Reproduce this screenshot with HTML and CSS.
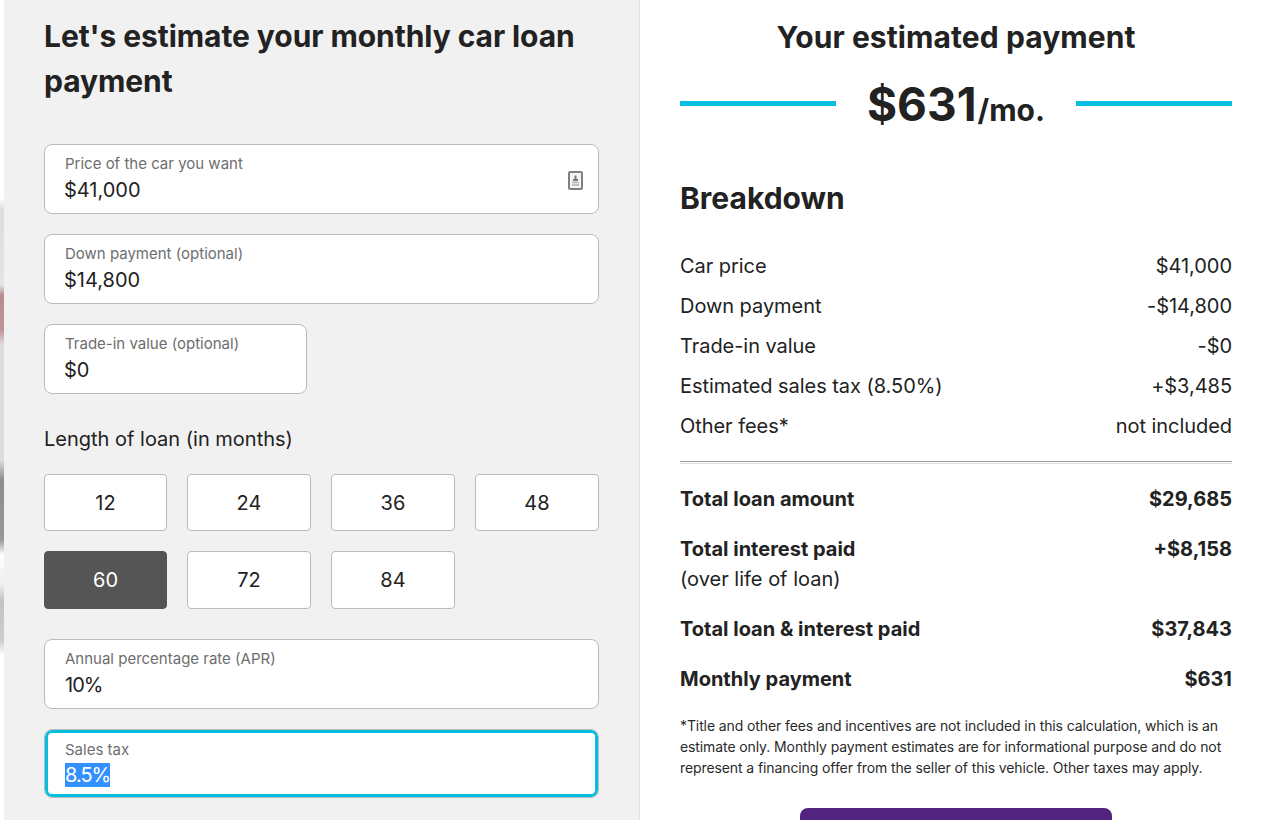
FILE: index.html
```html
<!DOCTYPE html>
<html lang="en">
<head>
    <meta charset="UTF-8">
    <meta name="viewport" content="width=device-width, initial-scale=1.0">
    <title>Payment calculator</title>
    <link rel="stylesheet" href="styles.css">
</head>
<body>
    <div class="backdrop"></div>

    <section class="form-panel">
        <h1>Let's estimate your monthly car loan payment</h1>

        <div class="field">
            <label for="price">Price of the car you want</label>
            <input type="text" id="price" value="$41,000">
            <svg class="field-icon" width="15" height="19" viewBox="0 0 15 19">
                <rect x="1" y="1" width="13" height="17" rx="1" fill="#f4f4f4" stroke="#808080" stroke-width="2"/>
                <path d="M7.5 4.5v4M5 9h5" stroke="#777" stroke-width="2" fill="none"/>
                <path d="M4 11.5h7M4 14h7" stroke="#b0b0b0" stroke-width="1.4" fill="none"/>
            </svg>
        </div>
        <div class="field">
            <label for="down">Down payment (optional)</label>
            <input type="text" id="down" value="$14,800">
        </div>
        <div class="field field-half">
            <label for="trade">Trade-in value (optional)</label>
            <input type="text" id="trade" value="$0">
        </div>

        <p class="term-label">Length of loan (in months)</p>
        <div class="terms">
            <button>12</button>
            <button>24</button>
            <button>36</button>
            <button>48</button>
            <button class="active">60</button>
            <button>72</button>
            <button>84</button>
        </div>

        <div class="field field-rate">
            <label for="apr">Annual percentage rate (APR)</label>
            <input type="text" id="apr" value="10%">
        </div>
        <div class="field field-rate field-focus">
            <label>Sales tax</label>
            <div class="value"><span class="selected">8.5%</span></div>
        </div>
    </section>

    <section class="result-panel">
        <h2>Your estimated payment</h2>
        <div class="payment">
            <span class="rule"></span>
            <div class="amount">$631<span>/mo.</span></div>
            <span class="rule"></span>
        </div>

        <h3>Breakdown</h3>
        <div class="row"><span>Car price</span><span>$41,000</span></div>
        <div class="row"><span>Down payment</span><span>-$14,800</span></div>
        <div class="row"><span>Trade-in value</span><span>-$0</span></div>
        <div class="row"><span>Estimated sales tax (8.50%)</span><span>+$3,485</span></div>
        <div class="row"><span>Other fees*</span><span>not included</span></div>

        <hr>

        <div class="total"><strong>Total loan amount</strong><strong>$29,685</strong></div>
        <div class="total total-sub"><strong>Total interest paid</strong><strong>+$8,158</strong></div>
        <div class="sub-note">(over life of loan)</div>
        <div class="total"><strong>Total loan &amp; interest paid</strong><strong>$37,843</strong></div>
        <div class="total"><strong>Monthly payment</strong><strong>$631</strong></div>

        <p class="disclaimer">*Title and other fees and incentives are not included in this calculation, which is an estimate only. Monthly payment estimates are for informational purpose and do not represent a financing offer from the seller of this vehicle. Other taxes may apply.</p>

        <div class="cta"></div>
    </section>
</body>
</html>
```

FILE: styles.css
```css
html, body {
    height: 820px;
    overflow: hidden;
}

body {
    margin: 0;
    display: flex;
    font-family: Inter, "Liberation Sans", sans-serif;
    color: #222;
    background-color: #fff;
}

/* blurred page behind the modal, only a sliver shows */
.backdrop {
    width: 4px;
    flex-shrink: 0;
    background: linear-gradient(to bottom, #fff 0, #fff 198px, #ddd 210px, #e4e4e0 285px, #b98a92 295px, #c0939a 330px, #ddd 345px, #ddd 460px, #8c8c8c 480px, #999 540px, #fff 555px, #eee 585px, #c4c4c4 600px, #ccc 640px, #fff 655px);
}

.form-panel {
    width: 636px;
    height: 820px;
    flex-shrink: 0;
    box-sizing: border-box;
    padding: 14px 40px 0;
    background-color: #f1f1f1;
    border-right: 1px solid #e4e4e4;
}

h1 {
    margin: 0 0 40px;
    font-size: 30px;
    line-height: 45px;
    font-weight: 700;
    letter-spacing: -0.07px;
    color: #222;
}

.field {
    position: relative;
    box-sizing: border-box;
    width: 555px;
    height: 70px;
    margin-bottom: 20px;
    padding: 10px 20px 0;
    background-color: #fff;
    border: 1px solid #bbb;
    border-radius: 8px;
}

.field-half {
    width: 263px;
}

.field label {
    display: block;
    font-size: 15px;
    line-height: 18px;
    color: #6e6e6e;
}

.field input,
.value {
    display: block;
    width: 100%;
    height: 28px;
    margin: 3px 0 0 -1px;
    padding: 0;
    border: none;
    outline: none;
    background: none;
    font-family: inherit;
    font-size: 20px;
    line-height: 28px;
    color: #222;
}

.field-rate input,
.field-rate .value {
    margin-left: 0;
    letter-spacing: -1px;
}

.field-icon {
    position: absolute;
    top: 26px;
    right: 15px;
}

.field-focus {
    height: 69px;
    margin: 0;
    padding-top: 11px;
    box-shadow: inset 0 0 0 3px #06bfe0;
}

.field-focus .value {
    margin-top: 2px;
}

.selected {
    background-color: #3390ff;
    color: #fff;
}

.term-label {
    margin: 30px 0 20px;
    font-size: 20px;
    line-height: 30px;
    color: #222;
}

.terms {
    display: grid;
    grid-template-columns: 123px 124px 124px 124px;
    gap: 20px;
    width: 555px;
    margin-bottom: 30px;
}

.terms button {
    height: 57px;
    padding: 0;
    background-color: #fff;
    border: 1px solid #bbb;
    border-radius: 4px;
    font-family: inherit;
    font-size: 20px;
    color: #222;
}

.terms button:nth-child(n+5) {
    height: 58px;
}

.terms .active {
    background-color: #555;
    border-color: #555;
    color: #fff;
}

.result-panel {
    flex: 1;
    padding: 15px 36px 0 40px;
    min-width: 0;
}

h2 {
    margin: 0;
    font-size: 30px;
    line-height: 45px;
    font-weight: 700;
    letter-spacing: 0.08px;
    text-align: center;
    color: #222;
}

.payment {
    display: flex;
    align-items: center;
    justify-content: space-between;
    height: 60px;
    margin-top: 13px;
}

.rule {
    width: 156px;
    height: 5px;
    background-color: #06bfe0;
}

.amount {
    padding-top: 8px;
    font-size: 46px;
    line-height: 60px;
    font-weight: 700;
}

.amount span {
    margin-left: 1px;
    font-size: 30px;
}

h3 {
    margin: 43px 0 30px;
    font-size: 30px;
    line-height: 45px;
    font-weight: 700;
}

.row,
.total {
    display: flex;
    justify-content: space-between;
    font-size: 20px;
    line-height: 30px;
}

.row {
    height: 40px;
    letter-spacing: -0.05px;
}

hr {
    height: 1px;
    margin: 10px 0 20px;
    border: none;
    border-top: 1px solid #999;
    border-bottom: 1px solid #ddd;
}

.total {
    height: 50px;
}

.total-sub {
    height: 30px;
}

.sub-note {
    height: 50px;
    font-size: 20px;
    line-height: 30px;
}

.disclaimer {
    margin: 1px 0 0;
    font-size: 14px;
    line-height: 21px;
    letter-spacing: -0.1px;
    color: #2a2a2a;
}

/* button is cut off by the bottom of the window */
.cta {
    width: 312px;
    height: 12px;
    margin: 30px auto 0;
    border-radius: 8px 8px 0 0;
    background-color: #52247f;
}
```
